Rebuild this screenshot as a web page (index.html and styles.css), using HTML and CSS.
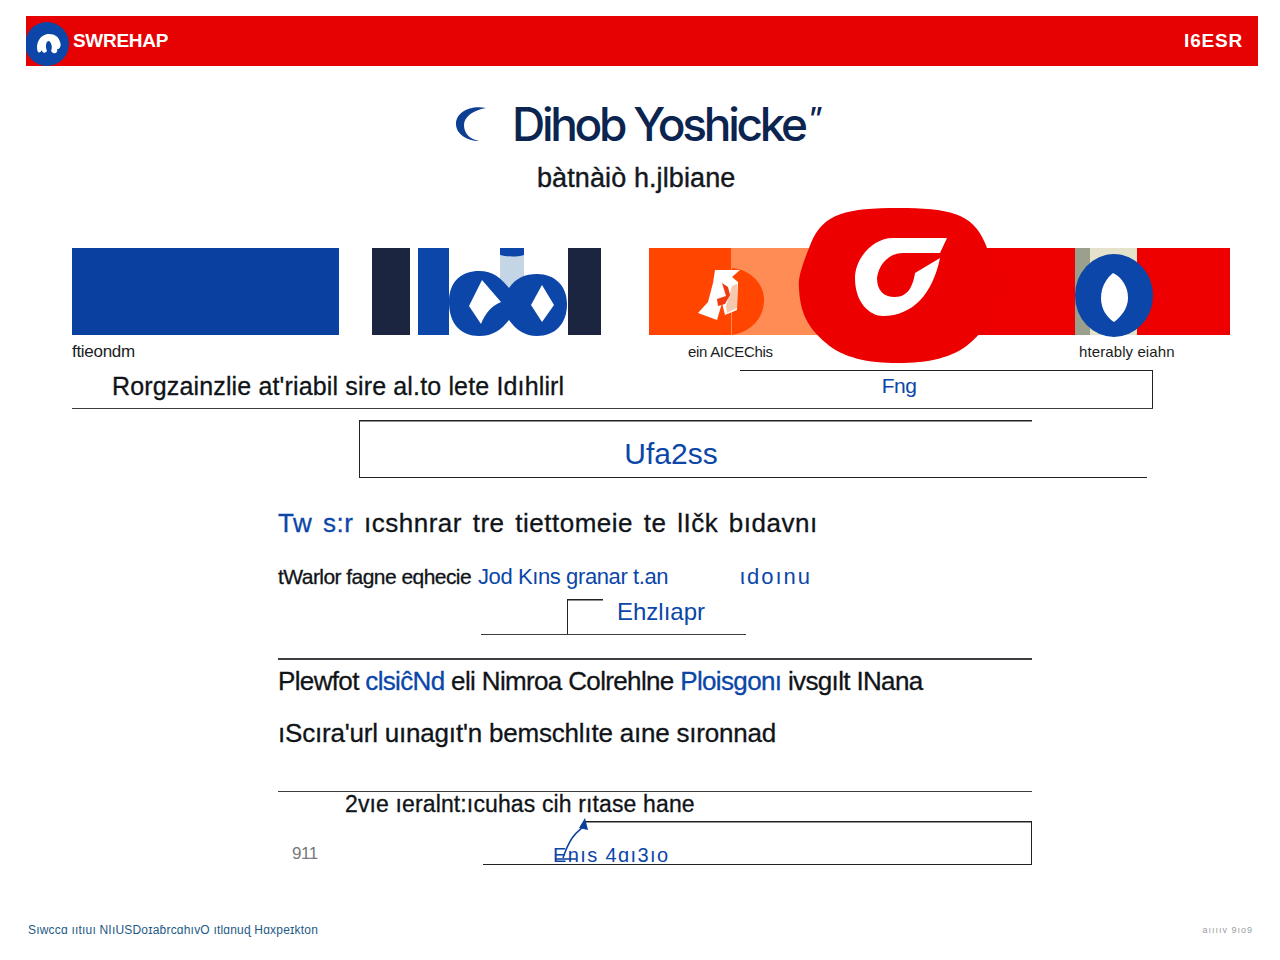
FILE: index.html
```html
<!DOCTYPE html>
<html lang="en">
<head>
<meta charset="UTF-8">
<title>Dihob Yoshicke</title>
<link rel="stylesheet" href="styles.css">
</head>
<body>
<header class="topbar">
  <div class="brand">
    <svg class="brand-mark" viewBox="0 0 44 44" width="44" height="44">
      <circle cx="21" cy="22" r="22" fill="#0b46a8"/>
      <path d="M12 30 C9 22 14 12 23 12 C29 12 33 15 34 20 C36 24 33 28 31 27 C32 30 30 32 27 31 L25 29 C27 25 25 20 23 19 C20 19 19 24 21 29 C19 32 16 31 16 28 C15 30 13 31 12 30 Z" fill="#fff"/>
    </svg>
    <span class="brand-name">SWREHAP</span>
  </div>
  <span class="topbar-code">I6ESR</span>
</header>

<section class="hero">
  <div class="hero-title">
    <svg class="hero-moon" viewBox="0 0 34 36" width="34" height="36">
      <path d="M31 1 C14 -2 1 6 1 17 C1 27 12 34 24 34 C14 32 9 26 9 18 C9 10 18 3 31 1 Z" fill="#0c3f92"/>
    </svg>
    <h1>Dihob Yoshicke<span class="hero-quote">”</span></h1>
  </div>
  <p class="hero-sub">bàtnàiò h.jlbiane</p>
</section>

<section class="strip">
  <div class="strip-cell cell-blue"></div>
  <div class="strip-group">
    <div class="strip-cell cell-navy"></div>
    <div class="strip-cell cell-blue-narrow"></div>
    <svg class="strip-knot" viewBox="0 0 119 87" width="119" height="87">
      <rect x="51" y="0" width="24" height="42" fill="#c4d5e6"/>
      <path d="M51 0 H75 V7 C68 9 58 9 51 7 Z" fill="#0b46a8"/>
      <path d="M0 54 C0 32 14 23 30 23 C44 23 52 30 60 40 C67 30 76 26 88 26 C106 26 118 38 118 56 C118 76 106 88 88 88 C76 88 67 82 60 72 C52 82 44 88 30 88 C12 88 0 76 0 54 Z" fill="#0b46a8"/>
      <path d="M33 32 L52 54 C42 58 36 66 32 76 L20 58 Z" fill="#fff"/>
      <path d="M93 37 L105 57 L93 74 L82 57 Z" fill="#fff"/>
    </svg>
    <div class="strip-cell cell-navy-end"></div>
  </div>
  <div class="strip-group strip-warm">
    <div class="strip-cell cell-orange"></div>
    <div class="strip-cell cell-peach"></div>
    <div class="strip-cell cell-red"></div>
    <div class="strip-cell cell-beige"></div>
    <div class="strip-cell cell-red-end"></div>
    <svg class="warm-half" viewBox="0 0 80 87" width="80" height="87">
      <path d="M43 20 C62 22 75 36 75 52 C75 70 62 84 43 87 Z" fill="#ff4500"/>
      <path d="M26 22 L51 22 L43 29 L49 34 L48 62 L36 67 L33 55 L28 72 L9 65 L19 54 L24 35 Z" fill="#fff"/>
      <path d="M43 38 L48 36 L48 60 L38 65 L37 58 Z" fill="#f4c9b0"/>
      <path d="M33 35 L39 39 L41 47 L36 56 L29 58 L28 51 L37 48 Z" fill="#f03a10"/>
    </svg>
    <svg class="warm-badge" viewBox="0 0 200 155" width="200" height="155">
      <path d="M100 0 C150 0 175 5 187 35 C197 60 200 70 199 80 C198 105 190 120 172 135 C155 150 130 155 100 155 C70 155 45 150 28 135 C10 120 2 105 1 80 C0 70 3 60 13 35 C25 5 50 0 100 0 Z" fill="#ec0000"/>
      <path d="M149 30 L95 30 C75 30 57 50 57 70 C57 95 72 108 85 108 C115 108 135 85 142 50 L117 65 C115 78 110 89 97 89 C85 89 79 82 79 70 C81 55 92 45 105 45 L142 45 Z" fill="#fff"/>
    </svg>
    <svg class="warm-ring" viewBox="0 0 78 83" width="78" height="83">
      <ellipse cx="39" cy="41.500" rx="39" ry="41.500" fill="#0b46a8"/>
      <path d="M38 19 C48 24 53 34 53 44 C53 54 46 63 39 68 C31 63 26 54 26 44 C26 32 32 24 38 19 Z" fill="#fff"/>
    </svg>
  </div>
</section>

<div class="strip-labels">
  <span class="label-a">ftieondm</span>
  <span class="label-b">ein AICEChis</span>
  <span class="label-c">hterably eiahn</span>
</div>

<div class="lead-row">
  <span class="lead-text">Rorgzainzlie at'riabil sire al.to lete Idıhlirl</span>
  <div class="lead-box">Fng</div>
</div>

<div class="class-box">Ufa2ss</div>

<main class="content">
  <p class="line line-a"><span class="blue">Tw s:r</span> ıcshnrar tre tiettomeie te lIčk bıdavnı</p>
  <p class="line-b">
    <span class="line-b-first">tWarlor fagne eqhecie</span>
    <span class="blue">Jod Kıns granar t.an</span>
    <span class="blue line-b-end">ιdoınu</span>
  </p>
  <div class="step-box"><div class="step-tab">Ehzlıapr</div></div>
  <hr class="rule rule-mid">
  <p class="line line-c">Plewfot <span class="blue">clsiĉNd</span> eli Nimroa Colrehlne <span class="blue">Ploisgonı</span> ivsgılt INana</p>
  <p class="line line-d">ıScıra'url uınagıt'n bemschlıte aıne sıronnad</p>
  <hr class="rule rule-low">
  <p class="note">2vıe ıeralnt:ıcuhas cih rıtase hane</p>
  <div class="end-row">
    <span class="end-num">911</span>
    <div class="end-box">
      <svg class="end-arrow" viewBox="0 0 40 50" width="40" height="50">
        <path d="M3 46 H24 M31 14 C24 20 18 24 11 45" fill="none" stroke="#0b3f9c" stroke-width="1.500"/>
        <path d="M33 5 L36 17 L27 15 Z" fill="#0b3f9c"/>
      </svg>
      <span class="end-text">Enıs 4ɑı3ıo</span>
    </div>
  </div>
</main>

<footer class="foot">
  <span class="foot-left">Sıwccɑ ııtıuı NIıUSDoɪaɓrcɑhıvO ıtlɑnuɖ Hɑxpeɪkton</span>
  <span class="foot-right">aııııv 9ıo9</span>
</footer>
</body>
</html>
```

FILE: styles.css
```css
:root {
  --red: #e60202; --blue: #0b46a8; --navy: #1b2540; --ink: #101418; --title: #0b2550;
  --rule: #3a3d42;
}
* { box-sizing: border-box; margin: 0; padding: 0; }
body { font-family: 'Liberation Sans', sans-serif; background: #fff; color: var(--ink); height: 960px; overflow: hidden; }
.blue { color: var(--blue); }

.topbar { margin: 16px 22px 0 26px; height: 50px; background: var(--red); display: flex; align-items: center; justify-content: space-between; padding-right: 15px; color: #fff; font-weight: 700; font-size: 19px; overflow: hidden; }
.brand { display: flex; align-items: center; gap: 3px; }
.brand-mark { display: block; margin-top: 5px; }
.brand-name { letter-spacing: -0.3px; }
.topbar-code { letter-spacing: 0.8px; }

.hero { padding-top: 34px; height: 182px; }
.hero-title { display: flex; align-items: center; margin-left: 455px; gap: 23px; }
.hero-moon { display: block; flex-shrink: 0; margin-top: 2px; }
h1 { font-family: Inter, sans-serif; font-size: 46px; line-height: 48px; font-weight: 500; color: var(--title); letter-spacing: -3.3px; white-space: nowrap; }
.hero-quote { margin-left: 4px; font-size: 30px; line-height: 0; vertical-align: 12px; letter-spacing: 0; }
.hero-sub { margin: 15px 0 0 537px; font-size: 27px; line-height: 30px; font-weight: 400; letter-spacing: 0.1px; color: #14181d; -webkit-text-stroke: 0.4px #14181d; }

.strip { position: relative; display: flex; margin-left: 72px; height: 87px; }
.strip-group { display: flex; position: relative; }
.strip-cell { height: 87px; flex-shrink: 0; }
.cell-blue { width: 267px; background: #0a41a0; margin-right: 33px; }
.cell-navy { width: 38px; background: var(--navy); margin-right: 8px; }
.cell-blue-narrow { width: 31px; background: var(--blue); }
.strip-knot { display: block; overflow: visible; }
.cell-navy-end { width: 33px; background: var(--navy); }
.strip-warm { margin-left: 48px; }
.cell-orange { width: 82px; background: #ff4500; }
.cell-peach { width: 90px; background: #ff8c55; }
.cell-red { width: 254px; background: #ee0000; }
.cell-beige { width: 62px; background: linear-gradient(90deg, #9aa08c 0 15px, #e4e2ca 15px); }
.cell-red-end { width: 93px; background: #ee0000; }
.warm-half { position: absolute; left: 40px; top: 0; }
.warm-badge { position: absolute; left: 149px; top: -40px; }
.warm-ring { position: absolute; left: 426px; top: 6px; }

.strip-labels { display: flex; margin: 8px 0 0 72px; height: 17px; font-size: 15px; line-height: 17px; letter-spacing: -0.3px; color: #1a1d22; white-space: nowrap; }
.label-a { width: 616px; font-size: 17px; }
.label-b { width: 391px; }
.label-c { letter-spacing: 0.1px; }

.lead-row { display: flex; justify-content: space-between; margin: 10px 0 0 72px; width: 1081px; height: 39px; border-bottom: 1.5px solid var(--rule); }
.lead-text { padding-left: 40px; font-size: 25px; line-height: 32px; letter-spacing: 0.15px; color: var(--ink); -webkit-text-stroke: 0.3px var(--ink); }
.lead-box { width: 413px; border-top: 1.5px solid #222; border-right: 1.5px solid #222; text-align: center; padding-right: 94px; font-size: 21px; line-height: 29px; color: var(--blue); letter-spacing: -0.5px; }

.class-box { margin: 11px 0 0 359px; width: 788px; height: 58px; border-left: 1.5px solid #222; border-bottom: 1.5px solid #222; background: linear-gradient(#222, #222) no-repeat 0 0 / 672px 1.5px; text-align: center; padding: 16px 165px 0 0; font-size: 30px; line-height: 36px; color: var(--blue); }

.content { margin: 29px 0 0 278px; width: 754px; }
.line { font-size: 26px; line-height: 32px; letter-spacing: -0.4px; white-space: nowrap; -webkit-text-stroke: 0.3px currentColor; }
.line-a { letter-spacing: 0.5px; word-spacing: 3px; }
.line-b { display: flex; margin-top: 25px; font-size: 22px; line-height: 26px; white-space: nowrap; letter-spacing: -0.4px; }
.line-b-first { width: 200px; font-size: 21px; letter-spacing: -0.55px; -webkit-text-stroke: 0.3px currentColor; }
.line-b-end { margin-left: auto; margin-right: 220px; letter-spacing: 2px; }
.step-box { margin: 9px 0 0 203px; width: 265px; height: 36px; border-bottom: 1.5px solid var(--rule); }
.step-tab { margin-left: 86px; height: 35px; border-left: 1.5px solid #222; background: linear-gradient(#222, #222) no-repeat 0 0 / 35px 1.5px; padding: 1px 0 0 49px; font-size: 24px; line-height: 24px; color: var(--blue); white-space: nowrap; }
.rule { border: 0; height: 1.5px; background: var(--rule); }
.rule-mid { margin-top: 23px; }
.line-c { margin-top: 5px; letter-spacing: -0.65px; }
.line-d { margin-top: 20px; letter-spacing: -0.2px; }
.rule-low { margin-top: 42px; }
.note { margin: 0 0 0 67px; font-size: 23px; line-height: 24px; letter-spacing: 0.13px; white-space: nowrap; -webkit-text-stroke: 0.3px currentColor; }
.end-row { display: flex; align-items: flex-end; margin-top: 5px; height: 44px; }
.end-num { width: 205px; padding-left: 14px; font-size: 17px; line-height: 24px; letter-spacing: -0.5px; color: #77797c; margin-bottom: -1px; }
.end-box { position: relative; flex: 1; height: 44px; border-right: 1.5px solid #222; border-bottom: 1.5px solid #222; background: linear-gradient(#222, #222) no-repeat right top / 447px 1.5px; padding: 23px 0 0 70px; font-size: 20px; line-height: 22px; letter-spacing: 1.4px; color: var(--blue); white-space: nowrap; }
.end-arrow { position: absolute; left: 69px; top: -8px; }

.foot { display: flex; justify-content: space-between; align-items: center; margin: 58px 27px 0 28px; }
.foot-left { font-size: 12px; color: #1d5a86; letter-spacing: 0.2px; }
.foot-right { font-size: 9px; color: #9a9ea4; letter-spacing: 1px; }
```
